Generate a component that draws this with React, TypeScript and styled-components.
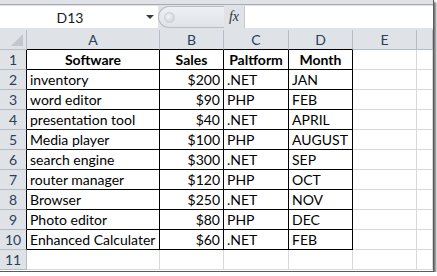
import React from "react";
import styled, { createGlobalStyle } from "styled-components";

const GlobalStyle = createGlobalStyle`
  html, body {
    margin: 0;
    padding: 0;
    background: #ffffff;
  }
  body {
    font-family: "Lato", "Liberation Sans", sans-serif;
  }
`;

const Frame = styled.div`
  width: 434px;
  height: 272px;
  box-sizing: border-box;
  border-right: 1px solid #5a5a5a;
  border-bottom: 1px solid #5a5a5a;
  box-shadow: 2px 2px 2px rgba(0, 0, 0, 0.55);
  overflow: hidden;
  background: #ffffff;
  display: flex;
  flex-direction: column;
`;

const TopStrip = styled.div`
  height: 4px;
  background: #dfe3e8;
  border-bottom: 1px solid #a7abb0;
`;

const FormulaRow = styled.div`
  height: 25px;
  box-sizing: border-box;
  background: #dfe3e8;
  display: flex;
  align-items: flex-start;
  padding-top: 1px;
`;

const NameBox = styled.div`
  width: 158px;
  height: 22px;
  background: #ffffff;
  display: flex;
  align-items: center;
  position: relative;
  font-size: 14px;
  color: #1a1a1a;
`;

const NameText = styled.span`
  width: 140px;
  text-align: center;
`;

const DropArrow = styled.span`
  width: 0;
  height: 0;
  border-left: 4px solid transparent;
  border-right: 4px solid transparent;
  border-top: 4px solid #3a3a3a;
  margin-left: 6px;
`;

const Splitter = styled.div`
  width: 66px;
  height: 22px;
  box-sizing: border-box;
  border: 1px solid #b9bdc3;
  border-right: none;
  border-radius: 11px 0 0 11px;
  background: linear-gradient(#eef0f3, #dfe3e8);
  display: flex;
  align-items: center;
  padding-left: 5px;
`;

const Grip = styled.span`
  width: 9px;
  height: 9px;
  border-radius: 50%;
  background: radial-gradient(circle at 40% 40%, #f4f5f7, #c5c9ce);
  border: 1px solid #cdd1d6;
`;

const FxButton = styled.div`
  width: 20px;
  height: 22px;
  display: flex;
  align-items: center;
  justify-content: center;
  font-family: "Liberation Serif", serif;
  font-style: italic;
  font-size: 14px;
  color: #333;
`;

const FormulaInput = styled.div`
  flex: 1;
  height: 22px;
  background: #ffffff;
  border-left: 1px solid #c6cad0;
`;

const Grid = styled.div`
  display: grid;
  grid-template-columns: 27px 133px 64px 65px 64px 64px 1fr;
  grid-auto-rows: 20px;
  flex: 1;
`;

const HeaderCell = styled.div<{ $dark?: boolean }>`
  box-sizing: border-box;
  background: #dfe3e8;
  border-right: 1px solid #b6bcc5;
  border-bottom: 1px solid ${(p) => (p.$dark ? "#000000" : "#b6bcc5")};
  color: #2c3e57;
  font-size: 14px;
  display: flex;
  align-items: center;
  justify-content: center;
`;

const Corner = styled(HeaderCell)`
  align-items: flex-end;
  justify-content: flex-end;
  padding: 0 3px 3px 0;
`;

const CornerTriangle = styled.span`
  width: 0;
  height: 0;
  border-left: 12px solid transparent;
  border-bottom: 12px solid #c2c7ce;
`;

const RowNum = styled.div<{ $dark?: boolean }>`
  box-sizing: border-box;
  background: #dfe3e8;
  border-right: 1px solid ${(p) => (p.$dark ? "#000000" : "#b6bcc5")};
  border-bottom: 1px solid #b6bcc5;
  color: #2c3e57;
  font-size: 14px;
  display: flex;
  align-items: center;
  justify-content: center;
`;

const Cell = styled.div<{ $boxed?: boolean; $align?: string; $bold?: boolean }>`
  box-sizing: border-box;
  border-right: 1px solid ${(p) => (p.$boxed ? "#000000" : "#d8d8d8")};
  border-bottom: 1px solid ${(p) => (p.$boxed ? "#000000" : "#d8d8d8")};
  font-size: 14px;
  color: #000000;
  font-weight: ${(p) => (p.$bold ? 700 : 400)};
  padding: 0 3px;
  display: flex;
  align-items: center;
  justify-content: ${(p) =>
    p.$align === "right" ? "flex-end" : p.$align === "center" ? "center" : "flex-start"};
  white-space: nowrap;
  overflow: hidden;
`;

const columns = ["A", "B", "C", "D", "E", ""];

const rows = [
  ["inventory", "$200", ".NET", "JAN"],
  ["word editor", "$90", "PHP", "FEB"],
  ["presentation tool", "$40", ".NET", "APRIL"],
  ["Media player", "$100", "PHP", "AUGUST"],
  ["search engine", "$300", ".NET", "SEP"],
  ["router manager", "$120", "PHP", "OCT"],
  ["Browser", "$250", ".NET", "NOV"],
  ["Photo editor", "$80", "PHP", "DEC"],
  ["Enhanced Calculater", "$60", ".NET", "FEB"],
];

export default function App() {
  return (
    <>
      <GlobalStyle />
      <Frame>
        <TopStrip />
        <FormulaRow>
          <NameBox>
            <NameText>D13</NameText>
            <DropArrow />
          </NameBox>
          <Splitter>
            <Grip />
          </Splitter>
          <FxButton>fx</FxButton>
          <FormulaInput />
        </FormulaRow>
        <Grid>
          <Corner>
            <CornerTriangle />
          </Corner>
          {columns.map((c, i) => (
            <HeaderCell key={i} $dark={i < 4}>
              {c}
            </HeaderCell>
          ))}

          <RowNum $dark>1</RowNum>
          <Cell $boxed $bold $align="center">Software</Cell>
          <Cell $boxed $bold $align="center">Sales</Cell>
          <Cell $boxed $bold $align="center">Paltform</Cell>
          <Cell $boxed $bold $align="center">Month</Cell>
          <Cell />
          <Cell />

          {rows.map((r, i) => (
            <React.Fragment key={i}>
              <RowNum $dark>{i + 2}</RowNum>
              <Cell $boxed>{r[0]}</Cell>
              <Cell $boxed $align="right">{r[1]}</Cell>
              <Cell $boxed>{r[2]}</Cell>
              <Cell $boxed>{r[3]}</Cell>
              <Cell />
              <Cell />
            </React.Fragment>
          ))}

          <RowNum>11</RowNum>
          <Cell />
          <Cell />
          <Cell />
          <Cell />
          <Cell />
          <Cell />
        </Grid>
      </Frame>
    </>
  );
}
